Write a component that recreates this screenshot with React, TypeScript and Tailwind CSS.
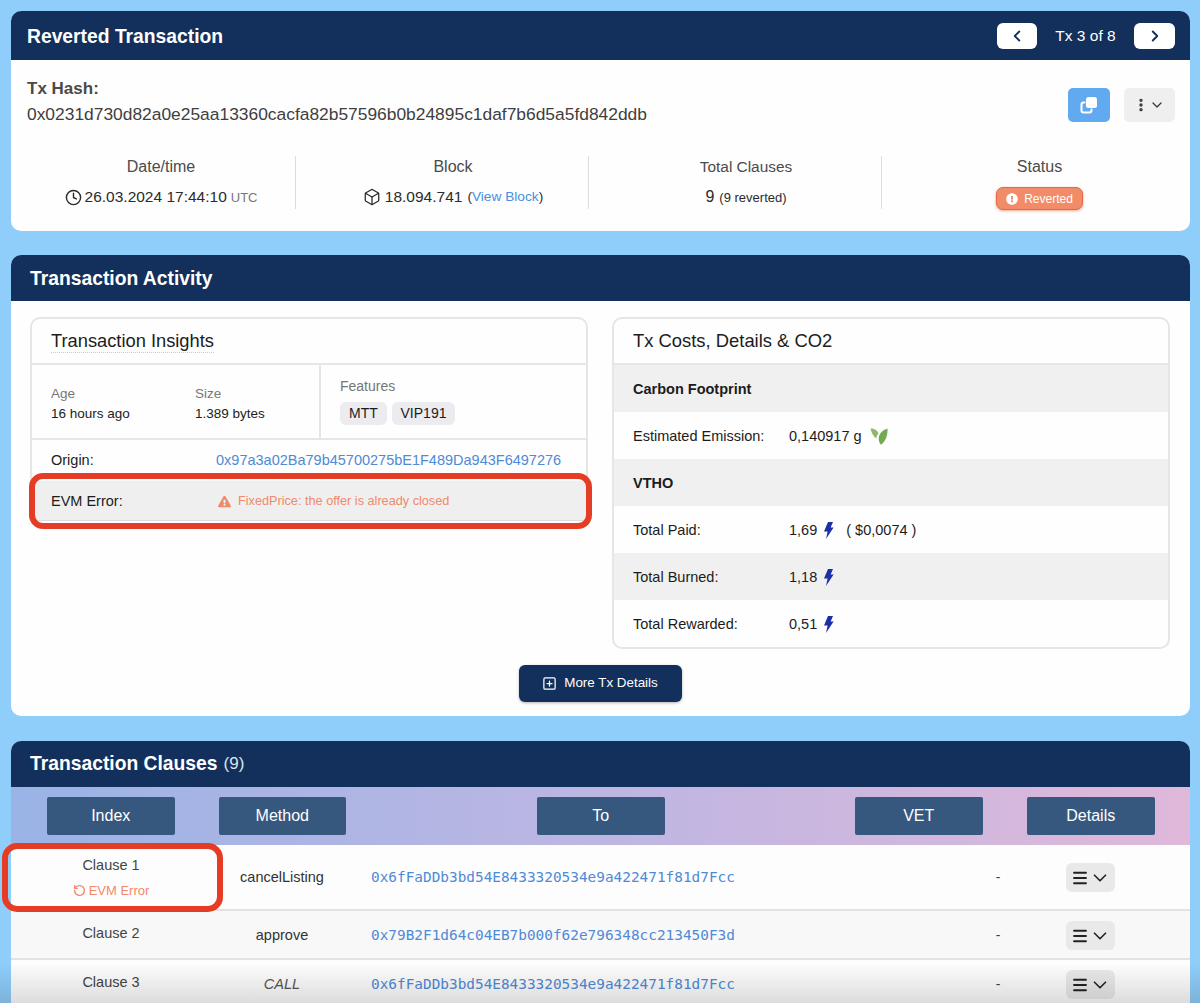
import React from "react";
import { Clock, Box, ChevronLeft, ChevronRight, ChevronDown, SquarePlus, RotateCcw, Menu, EllipsisVertical } from "lucide-react";
import { FaExclamationCircle, FaExclamationTriangle } from "react-icons/fa";

const sans = "font-['Liberation_Sans',Arial,sans-serif]";

function Bolt() {
  return <svg width="11" height="17" viewBox="0 0 11 17" className="inline-block"><path d="M5 0 L10 0 L7.6 5.6 L10.6 5.6 L3 17 L4.6 9.6 L1 9.6 Z" fill="#1b2fa6" /></svg>;
}

function Copy() {
  return (
    <svg width="18" height="18" viewBox="0 0 18 18" fill="none">
      <rect x="6" y="1" width="11" height="11" rx="2.5" fill="#ffffff" />
      <path d="M4.5 6.5 H3.5 A2 2 0 0 0 1.5 8.5 V14.5 A2 2 0 0 0 3.5 16.5 H9.5 A2 2 0 0 0 11.5 14.5 V13.5" stroke="#ffffff" strokeWidth="2" strokeLinecap="round" />
    </svg>
  );
}

function Leaf() {
  return (
    <svg width="18" height="17" viewBox="0 0 18 17">
      <path d="M0.5 0.5 C4.5 0.5 7.5 2 8.5 5.5 C7 7 6.4 9 6.4 10.5 C3.5 8.5 1.5 5 0.5 0.5 Z" fill="#8cb96a" />
      <path d="M17.5 0.5 C18 7.5 15 14 11 16.8 C7.5 13 7 4 17.5 0.5 Z" fill="#74a94f" />
    </svg>
  );
}

function Stat({ label, first, last, children }: { label: React.ReactNode; first?: boolean; last?: boolean; children: React.ReactNode }) {
  return (
    <div className={`flex h-[53px] flex-col items-center justify-between ${first ? "w-[269px]" : "w-[293px] pl-[22px]"} ${last ? "" : "border-r border-[#dddddd]"}`}>
      <div className="text-[16px] leading-[22px] text-[#4b4b4b]">{label}</div>
      <div className="flex h-[24px] items-center text-[#2b2b2b]">{children}</div>
    </div>
  );
}

function CostRow({ label, gray, bold, children }: { label: string; gray?: boolean; bold?: boolean; children?: React.ReactNode }) {
  return (
    <div className={`flex flex-1 items-center pl-[19px] pt-[2px] text-[14.5px] text-[#1c1c1c] ${gray ? "bg-[#f0f0f0]" : ""} ${bold ? "font-bold" : ""}`}>
      <div className="w-[156px] shrink-0">{label}</div>
      {children}
    </div>
  );
}

function HeadCell({ ml, children }: { ml: string; children: React.ReactNode }) {
  return <div className={`flex h-[38px] w-[127.5px] items-center justify-center rounded-[2px] bg-[#37587e] text-[16px] text-white ${ml}`}>{children}</div>;
}

function ClauseRow({ h, method, addr, italic, gray, children }: { h: string; method: string; addr: string; italic?: boolean; gray?: boolean; children: React.ReactNode }) {
  return (
    <div className={`flex items-center border-b-2 border-[#e2e2e2] ${h} ${gray ? "bg-[#f8f8f8]" : "bg-[#fdfdfd]"}`}>
      <div className="w-[200px] shrink-0 text-center text-[14.5px] text-[#444444]">{children}</div>
      <div className={`w-[142px] shrink-0 text-center text-[14.5px] ${italic ? "italic text-[#555555]" : "text-[#333333]"}`}>{method}</div>
      <div className="ml-[18px] w-[617px] shrink-0 font-['DejaVu_Sans_Mono',monospace] text-[14.4px] text-[#4f8ad6]">{addr}</div>
      <div className="w-[20px] shrink-0 text-center text-[14px] text-[#444444]">-</div>
      <div className="ml-[58px] flex h-[29px] w-[49px] items-center justify-center rounded-[6px] bg-[#e9e9e9] text-[#222222]">
        <Menu size={18} strokeWidth={2.4} />
        <ChevronDown size={22} strokeWidth={1.8} />
      </div>
    </div>
  );
}

export default function App() {
  return (
    <div className={`relative h-[1003px] w-[1200px] overflow-hidden bg-[#8fcdfb] pl-[11px] pr-[10px] pt-[11px] ${sans}`}>
      {/* Reverted Transaction */}
      <section className="h-[220px] overflow-hidden rounded-[10px] bg-[#fefefe]">
        <header className="flex h-[49px] items-center justify-between bg-[#12305b] pl-4 pr-[15px] text-white">
          <h1 className="pt-[4px] text-[19.3px] font-bold">Reverted Transaction</h1>
          <div className="flex items-center">
            <button className="flex h-[26px] w-[40px] items-center justify-center rounded-[6px] bg-white text-[#12305b]"><ChevronLeft size={18} strokeWidth={2.5} /></button>
            <span className="w-[97px] text-center text-[15.5px]">Tx 3 of 8</span>
            <button className="flex h-[26px] w-[41px] items-center justify-center rounded-[6px] bg-white text-[#12305b]"><ChevronRight size={18} strokeWidth={2.5} /></button>
          </div>
        </header>
        <div className="flex items-start justify-between pl-4 pr-[15px] pt-[18px]">
          <div>
            <div className="pt-[1px] text-[17px] font-bold leading-[20px] text-[#4a4a4a]">Tx Hash:</div>
            <div className="mt-[5px] text-[17.4px] leading-[20px] text-[#3f3f3f]">0x0231d730d82a0e25aa13360cacfa82b57596b0b24895c1daf7b6d5a5fd842ddb</div>
          </div>
          <div className="mt-[10px] flex gap-[14px]">
            <button className="flex h-[34px] w-[42px] items-center justify-center rounded-[5px] bg-[#62aaf0]"><Copy /></button>
            <button className="flex h-[34px] w-[51px] items-center justify-center rounded-[5px] bg-[#efefef] pr-[2px] text-[#333333]"><EllipsisVertical size={16} strokeWidth={3} /><ChevronDown size={16} strokeWidth={1.8} /></button>
          </div>
        </div>
        <div className="mt-[32px] flex pl-4">
          <Stat label="Date/time" first>
            <Clock size={17} strokeWidth={2} className="mr-[3px]" />
            <span className="text-[15.5px]">26.03.2024 17:44:10</span>
            <span className="ml-[4px] mt-[1px] text-[13px] text-[#777777]">UTC</span>
          </Stat>
          <Stat label="Block">
            <Box size={18} strokeWidth={1.7} className="mr-[4px]" />
            <span className="text-[15.5px]">18.094.741</span>
            <span className="ml-[5px] mt-[1px] text-[13.7px]">(<span className="text-[#4a8fe0]">View Block</span>)</span>
          </Stat>
          <Stat label={<span className="text-[15.4px]">Total Clauses</span>}>
            <span className="text-[16px]">9</span>
            <span className="ml-[5px] mt-[1px] text-[13px]">(9 reverted)</span>
          </Stat>
          <Stat label="Status" last>
            <span className="mt-[3px] flex h-[23px] w-[87px] items-center justify-center gap-[6px] rounded-[7px] border border-[#e06a45] bg-[#f28b67] text-[12px] text-white shadow-[0_1px_3px_rgba(224,106,69,0.6)]">
              <FaExclamationCircle size={12} />Reverted
            </span>
          </Stat>
        </div>
      </section>

      {/* Transaction Activity */}
      <section className="mt-6 h-[461px] overflow-hidden rounded-[10px] bg-[#fefefe]">
        <header className="flex h-[46px] items-center bg-[#12305b] pl-[19px] pt-[2px] text-[19.3px] font-bold text-white">Transaction Activity</header>
        <div className="flex items-start gap-[24px] pl-[19px] pr-[20px] pt-[16px]">
          <div className="w-[558px] shrink-0 overflow-hidden rounded-t-[10px] border-x-2 border-t-2 border-[#e6e6e6]">
            <div className="flex h-[46px] items-center border-b-2 border-[#e6e6e6] pl-[19px]">
              <span className="border-b border-dotted border-[#cccccc] text-[18.3px] leading-[22px] text-[#1c1c1c]">Transaction Insights</span>
            </div>
            <div className="flex h-[75px] border-b-2 border-[#e6e6e6]">
              <div className="flex w-[289px] items-center border-r-2 border-[#e6e6e6] pl-[19px] pt-[5px] text-[13.5px]">
                <div className="w-[144px]"><div className="text-[#777777]">Age</div><div className="text-[#1c1c1c]">16 hours ago</div></div>
                <div><div className="text-[#777777]">Size</div><div className="text-[#1c1c1c]">1.389 bytes</div></div>
              </div>
              <div className="pl-[19px] pt-[11px]">
                <div className="text-[14px] text-[#777777]">Features</div>
                <div className="mt-[5px] flex gap-[5px] text-[14px] text-[#1c1c1c]">
                  <span className="flex h-[23px] w-[47px] items-center justify-center rounded-[6px] bg-[#ececf0]">MTT</span>
                  <span className="flex h-[23px] w-[63px] items-center justify-center rounded-[6px] bg-[#ececf0]">VIP191</span>
                </div>
              </div>
            </div>
            <div className="flex h-[41px] items-center pl-[19px] pt-[1px] text-[14.5px] text-[#1c1c1c]">
              <div className="w-[165px]">Origin:</div>
              <div className="text-[#4f8ad6]">0x97a3a02Ba79b45700275bE1F489Da943F6497276</div>
            </div>
            <div className="flex h-[40px] items-center border-b border-[#dddddd] bg-[#efefef] pl-[19px] pt-[2px] text-[14.5px] text-[#1c1c1c]">
              <div className="w-[167px]">EVM Error:</div>
              <FaExclamationTriangle size={13} className="mr-[7px] text-[#ef8a6a]" />
              <span className="text-[12.7px] text-[#ef8a6a]">FixedPrice: the offer is already closed</span>
            </div>
          </div>
          <div className="flex h-[332px] w-[558px] shrink-0 flex-col overflow-hidden rounded-[10px] border-2 border-[#e6e6e6]">
            <div className="flex h-[46px] shrink-0 items-center border-b-2 border-[#e6e6e6] pl-[19px] text-[18.4px] text-[#1c1c1c]">Tx Costs, Details &amp; CO2</div>
            <CostRow label="Carbon Footprint" gray bold />
            <CostRow label="Estimated Emission:"><span>0,140917 g</span><span className="ml-[8px]"><Leaf /></span></CostRow>
            <CostRow label="VTHO" gray bold />
            <CostRow label="Total Paid:"><span>1,69</span><span className="ml-[6px]"><Bolt /></span><span className="ml-[12px]">( $0,0074 )</span></CostRow>
            <CostRow label="Total Burned:" gray><span>1,18</span><span className="ml-[6px]"><Bolt /></span></CostRow>
            <CostRow label="Total Rewarded:"><span>0,51</span><span className="ml-[6px]"><Bolt /></span></CostRow>
          </div>
        </div>
        <div className="mt-[16px] flex justify-center">
          <button className="flex h-[37px] w-[163px] items-center justify-center gap-[7px] rounded-[6px] bg-[#12305b] pr-[1px] text-[13.4px] text-white shadow-[0_1px_3px_rgba(0,0,0,0.3)]"><SquarePlus size={15} />More Tx Details</button>
        </div>
      </section>

      {/* Transaction Clauses */}
      <section className="mt-[25px] overflow-hidden rounded-t-[10px] bg-[#fefefe]">
        <header className="flex h-[46px] items-center bg-[#12305b] pl-[19px] text-white"><span className="text-[19.3px] font-bold">Transaction Clauses</span><span className="ml-[6px] text-[17px] text-[#dde4ee]">(9)</span></header>
        <div className="flex h-[58px] items-center bg-linear-to-r from-[#9ab3e6] via-[#bdb6e2] to-[#e0b8da]">
          <HeadCell ml="ml-[36px]">Index</HeadCell>
          <HeadCell ml="ml-[44px]">Method</HeadCell>
          <HeadCell ml="ml-[191px]">To</HeadCell>
          <HeadCell ml="ml-[190.5px]">VET</HeadCell>
          <HeadCell ml="ml-[44.5px]">Details</HeadCell>
        </div>
        <ClauseRow h="h-[66px] pt-[1px]" method="cancelListing" addr="0x6fFaDDb3bd54E8433320534e9a422471f81d7Fcc">
          <div>Clause 1</div>
          <div className="mt-[4px] flex items-center justify-center gap-[3px] text-[13px] text-[#ef8a6a]"><RotateCcw size={13} strokeWidth={2.5} />EVM Error</div>
        </ClauseRow>
        <ClauseRow h="h-[49px] pt-[2px]" gray method="approve" addr="0x79B2F1d64c04EB7b000f62e796348cc213450F3d">
          <div className="-mt-[4px]">Clause 2</div>
        </ClauseRow>
        <ClauseRow h="h-[49px] pt-[2px]" method="CALL" italic addr="0x6fFaDDb3bd54E8433320534e9a422471f81d7Fcc">
          <div className="-mt-[4px]">Clause 3</div>
        </ClauseRow>
      </section>

      {/* fade over the bottom of the capture */}
      <div className="pointer-events-none absolute bottom-0 left-0 h-[40px] w-full bg-linear-to-b from-transparent to-[rgba(0,0,0,0.13)]" />

      {/* red annotations */}
      <div className="pointer-events-none absolute left-[29px] top-[473px] h-[56px] w-[563px] rounded-[14px] border-[6px] border-[#e53d25]" />
      <div className="pointer-events-none absolute left-[2px] top-[843px] h-[69px] w-[221px] rounded-[15px] border-[6px] border-[#e53d25]" />
    </div>
  );
}
